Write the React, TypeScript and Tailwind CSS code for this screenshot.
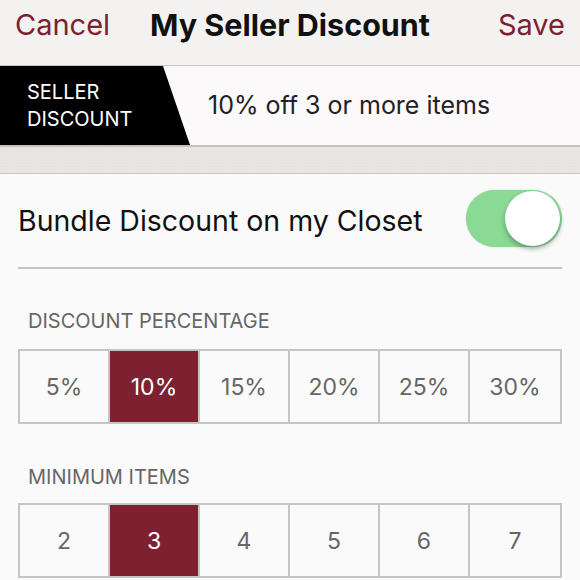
import React from "react";

const font = { fontFamily: "Inter, 'Open Sans', sans-serif" };

function Segmented({ options, selected }: { options: string[]; selected: string }) {
  return (
    <div className="grid grid-cols-6 h-[75px] border-2 border-[#c6c4c4] divide-x-2 divide-[#c6c4c4]">
      {options.map((o) => (
        <div
          key={o}
          className={
            "flex items-center justify-center text-[23px] pt-[2px] " +
            (o === selected ? "bg-[#7d2131] text-white" : "bg-[#fbfafa] text-[#666]")
          }
        >
          {o}
        </div>
      ))}
    </div>
  );
}

export default function App() {
  return (
    <div className="w-[580px] h-[580px] overflow-hidden bg-[#fbfafa]" style={font}>
      {/* navigation bar */}
      <div className="h-[66px] bg-[#f4f2f0] border-b border-[#c9c7c5] grid grid-cols-[1fr_auto_1fr] items-start px-[15px] pt-[6px]">
        <span className="justify-self-start text-[29px] leading-[38px] text-[#7b2230]">Cancel</span>
        <span className="text-[30.5px] leading-[38px] font-bold text-[#111]">My Seller Discount</span>
        <span className="justify-self-end text-[29px] leading-[38px] text-[#7b2230]">Save</span>
      </div>

      {/* current discount banner */}
      <div className="h-[81px] bg-[#fbf9f9] flex items-center border-b-2 border-[#c4c2c0]">
        <div className="relative h-full w-[190px] shrink-0">
          <div className="absolute inset-0 bg-black [clip-path:polygon(0_0,163px_0,190px_100%,0_100%)]" />
          <div className="relative h-full flex flex-col justify-center pl-[27px] text-white text-[20px] leading-[27px]">
            <span>SELLER</span>
            <span>DISCOUNT</span>
          </div>
        </div>
        <span className="ml-[18px] text-[25px] text-[#222]">10% off 3 or more items</span>
      </div>

      {/* textured spacer */}
      <div className="h-[27px] bg-[#e8e6e2] border-b border-[#cac8c6] bg-[radial-gradient(circle,rgba(0,0,0,0.02)_1px,transparent_1px)] bg-[length:3px_3px]" />

      <div className="px-[18px]">
        {/* bundle toggle */}
        <div className="h-[95px] flex items-center justify-between border-b-2 border-[#c4c4c4] pt-[2px]">
          <span className="text-[28.5px] text-[#111]">Bundle Discount on my Closet</span>
          <div className="relative w-[96px] h-[57px] rounded-full bg-[#8ad994] shadow-[0_0_2px_rgba(0,0,0,0.15)] -mt-[6px]">
            <div className="absolute right-[2px] top-[1px] w-[55px] h-[55px] rounded-full bg-white shadow-[0_3px_5px_rgba(0,0,0,0.3)]" />
          </div>
        </div>

        <div className="pt-[40px] pl-[10px] text-[20px] text-[#666] leading-[24px]">DISCOUNT PERCENTAGE</div>
        <div className="mt-[16px]">
          <Segmented options={["5%", "10%", "15%", "20%", "25%", "30%"]} selected="10%" />
        </div>

        <div className="pt-[41px] pl-[10px] text-[20px] text-[#666] leading-[24px]">MINIMUM ITEMS</div>
        <div className="mt-[14px]">
          <Segmented options={["2", "3", "4", "5", "6", "7"]} selected="3" />
        </div>
      </div>
    </div>
  );
}
